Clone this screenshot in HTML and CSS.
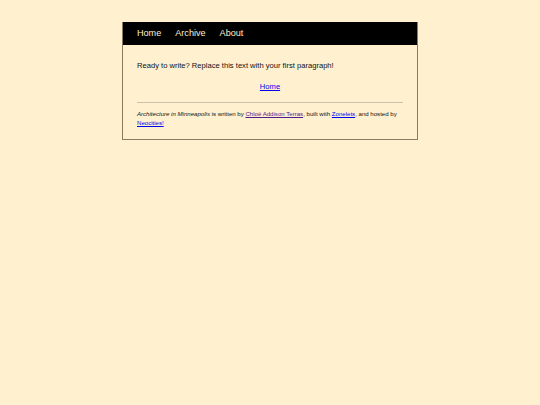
FILE: index.html
```html
<!DOCTYPE html>
<html lang="en">
<head>
<meta charset="utf-8">
<title>Architecture in Minneapolis</title>
<link rel="stylesheet" href="styles.css">
</head>
<body>
<div class="page">
  <header class="site-header">
    <nav class="nav">
      <a href="#" class="nav-link">Home</a>
      <a href="#" class="nav-link">Archive</a>
      <a href="#" class="nav-link">About</a>
    </nav>
  </header>
  <main class="content">
    <p class="intro">Ready to write? Replace this text with your first paragraph!</p>
    <div class="home-row"><a href="#" class="link">Home</a></div>
    <hr class="rule">
    <footer class="footer">
      <em>Architecture in Minneapolis</em> is written by <a href="#" class="link visited">Chloë Addison Terras</a>, built with <a href="#" class="link">Zonelets</a>, and hosted by <a href="#" class="link">Neocities!</a>
    </footer>
  </main>
</div>
</body>
</html>
```
FILE: styles.css
```css
html, body {
  margin: 0;
  padding: 0;
  background: #fff0d0;
}
body {
  font-family: "Liberation Sans", Arial, sans-serif;
  color: #111;
  padding-top: 22px;
}
.page {
  width: 294px;
  margin: 0 auto;
  border: 1px solid #8a7c62;
  border-top: none;
}
.site-header {
  background: #000;
  height: 23px;
  display: flex;
  align-items: center;
  padding: 0 14px;
}
.nav {
  display: flex;
  gap: 14px;
  font-size: 9.1px;
  line-height: 1;
}
.nav-link {
  color: #fff0d0;
  text-decoration: none;
}
.content {
  padding: 15px 14px 12px;
  display: flex;
  flex-direction: column;
}
.intro {
  margin: 0;
  font-size: 7.6px;
  line-height: 11.4px;
}
.home-row {
  margin-top: 10px;
  text-align: center;
  font-size: 7.6px;
  line-height: 11.4px;
}
.link {
  color: #0000ee;
}
.link.visited {
  color: #551a8b;
}
.rule {
  margin: 9px 0 0;
  border: none;
  border-top: 1px solid #c9c0ae;
  height: 0;
}
.footer {
  margin-top: 6px;
  font-size: 6.08px;
  line-height: 9.3px;
}
```
